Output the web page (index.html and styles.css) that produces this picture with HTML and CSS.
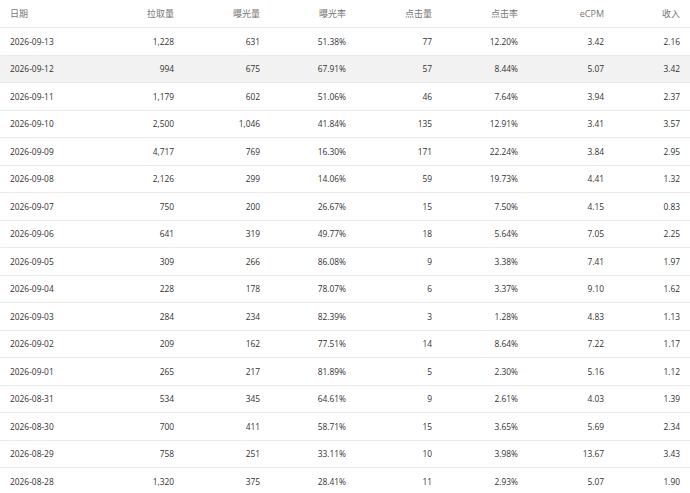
FILE: index.html
```html
<!DOCTYPE html>
<html lang="zh-CN">
<head>
<meta charset="utf-8">
<title>数据表</title>
<link rel="stylesheet" href="styles.css">
</head>
<body>
<table class="data-table">
  <colgroup>
    <col class="c-date"><col class="c-num"><col class="c-num"><col class="c-num"><col class="c-num"><col class="c-num"><col class="c-num"><col class="c-last">
  </colgroup>
  <thead>
    <tr><th class="left">日期</th><th>拉取量</th><th>曝光量</th><th>曝光率</th><th>点击量</th><th>点击率</th><th>eCPM</th><th>收入</th></tr>
  </thead>
  <tbody>
    <tr><td class="left">2026-09-13</td><td>1,228</td><td>631</td><td>51.38%</td><td>77</td><td>12.20%</td><td>3.42</td><td>2.16</td></tr>
    <tr class="hover"><td class="left">2026-09-12</td><td>994</td><td>675</td><td>67.91%</td><td>57</td><td>8.44%</td><td>5.07</td><td>3.42</td></tr>
    <tr><td class="left">2026-09-11</td><td>1,179</td><td>602</td><td>51.06%</td><td>46</td><td>7.64%</td><td>3.94</td><td>2.37</td></tr>
    <tr><td class="left">2026-09-10</td><td>2,500</td><td>1,046</td><td>41.84%</td><td>135</td><td>12.91%</td><td>3.41</td><td>3.57</td></tr>
    <tr><td class="left">2026-09-09</td><td>4,717</td><td>769</td><td>16.30%</td><td>171</td><td>22.24%</td><td>3.84</td><td>2.95</td></tr>
    <tr><td class="left">2026-09-08</td><td>2,126</td><td>299</td><td>14.06%</td><td>59</td><td>19.73%</td><td>4.41</td><td>1.32</td></tr>
    <tr><td class="left">2026-09-07</td><td>750</td><td>200</td><td>26.67%</td><td>15</td><td>7.50%</td><td>4.15</td><td>0.83</td></tr>
    <tr><td class="left">2026-09-06</td><td>641</td><td>319</td><td>49.77%</td><td>18</td><td>5.64%</td><td>7.05</td><td>2.25</td></tr>
    <tr><td class="left">2026-09-05</td><td>309</td><td>266</td><td>86.08%</td><td>9</td><td>3.38%</td><td>7.41</td><td>1.97</td></tr>
    <tr><td class="left">2026-09-04</td><td>228</td><td>178</td><td>78.07%</td><td>6</td><td>3.37%</td><td>9.10</td><td>1.62</td></tr>
    <tr><td class="left">2026-09-03</td><td>284</td><td>234</td><td>82.39%</td><td>3</td><td>1.28%</td><td>4.83</td><td>1.13</td></tr>
    <tr><td class="left">2026-09-02</td><td>209</td><td>162</td><td>77.51%</td><td>14</td><td>8.64%</td><td>7.22</td><td>1.17</td></tr>
    <tr><td class="left">2026-09-01</td><td>265</td><td>217</td><td>81.89%</td><td>5</td><td>2.30%</td><td>5.16</td><td>1.12</td></tr>
    <tr><td class="left">2026-08-31</td><td>534</td><td>345</td><td>64.61%</td><td>9</td><td>2.61%</td><td>4.03</td><td>1.39</td></tr>
    <tr><td class="left">2026-08-30</td><td>700</td><td>411</td><td>58.71%</td><td>15</td><td>3.65%</td><td>5.69</td><td>2.34</td></tr>
    <tr><td class="left">2026-08-29</td><td>758</td><td>251</td><td>33.11%</td><td>10</td><td>3.98%</td><td>13.67</td><td>3.43</td></tr>
    <tr><td class="left">2026-08-28</td><td>1,320</td><td>375</td><td>28.41%</td><td>11</td><td>2.93%</td><td>5.07</td><td>1.90</td></tr>
  </tbody>
</table>
</body>
</html>
```
FILE: styles.css
```css
html, body {
  margin: 0;
  padding: 0;
  background: #ffffff;
}

body {
  font-family: "Open Sans", "Noto Sans CJK SC", sans-serif;
  color: #333333;
}

.data-table {
  width: 690px;
  border-collapse: collapse;
  table-layout: fixed;
}

.c-date { width: 98px; }
.c-num { width: 86px; }
.c-last { width: 76px; }

.data-table th,
.data-table td {
  padding: 0 10px 0 0;
  text-align: right;
  white-space: nowrap;
  border-bottom: 1px solid #ebebeb;
}

.data-table th {
  height: 27px;
  font-size: 9px;
  font-weight: normal;
  color: #777777;
}

.data-table td {
  height: 26.5px;
  font-size: 8.4px;
  color: #333333;
}

.data-table .left {
  text-align: left;
  padding-left: 10px;
}

.data-table tr.hover td {
  background: #f2f2f2;
}
```
